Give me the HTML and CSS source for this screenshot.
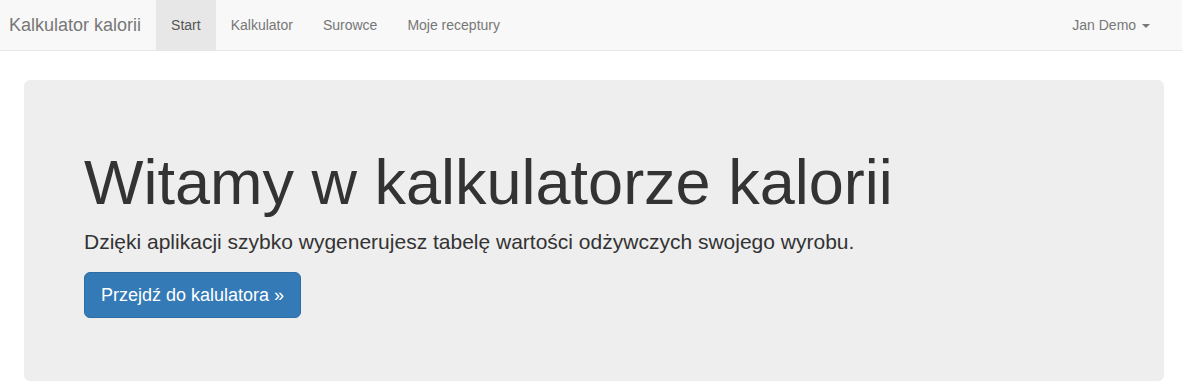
FILE: index.html
```html
<!DOCTYPE html>
<html lang="pl">
<head>
    <meta charset="UTF-8">
    <meta name="viewport" content="width=device-width, initial-scale=1.0">
    <title>Kalkulator kalorii</title>
    <link rel="stylesheet" href="styles.css">
</head>
<body>

<nav class="navbar">
    <a class="brand" href="#">Kalkulator kalorii</a>
    <ul class="nav">
        <li class="active"><a href="#">Start</a></li>
        <li><a href="#">Kalkulator</a></li>
        <li><a href="#">Surowce</a></li>
        <li><a href="#">Moje receptury</a></li>
    </ul>
    <ul class="nav nav-right">
        <li><a href="#">Jan Demo <span class="caret"></span></a></li>
    </ul>
</nav>

<div class="container">
    <div class="jumbotron">
        <h1>Witamy w kalkulatorze kalorii</h1>
        <p>Dzięki aplikacji szybko wygenerujesz tabelę wartości odżywczych swojego wyrobu.</p>
        <p><a class="btn" href="#">Przejdź do kalulatora &raquo;</a></p>
    </div>
</div>

</body>
</html>
```

FILE: styles.css
```css
* {
    box-sizing: border-box;
}
body {
    font-family: "Liberation Sans", Arial, Helvetica, sans-serif;
    font-size: 14px;
    line-height: 1.42857;
    color: #333;
    background-color: #fff;
    margin: 0;
}
a {
    text-decoration: none;
}
.navbar {
    display: flex;
    align-items: stretch;
    height: 51px;
    padding-right: 17px;
    background-color: #f8f8f8;
    border-bottom: 1px solid #e7e7e7;
}
.brand {
    padding: 15px 15px 15px 9px;
    font-size: 18px;
    line-height: 20px;
    color: #777;
}
.nav {
    display: flex;
    list-style: none;
    margin: 0;
    padding: 0;
}
.nav a {
    display: block;
    padding: 15px;
    line-height: 20px;
    color: #777;
}
.nav .active a {
    color: #555;
    background-color: #e7e7e7;
}
.nav-right {
    margin-left: auto;
}
.caret {
    display: inline-block;
    width: 0;
    height: 0;
    margin-left: 2px;
    vertical-align: middle;
    border-top: 4px solid;
    border-right: 4px solid transparent;
    border-left: 4px solid transparent;
}
.container {
    width: 1140px;
    margin: 29px 0 0 24px;
}
.jumbotron {
    padding: 48px 60px;
    background-color: #eee;
    border-radius: 6px;
}
.jumbotron h1 {
    margin: 20px 0 10px;
    font-size: 63px;
    font-weight: 500;
    line-height: 1.1;
}
.jumbotron p {
    margin: 0 0 15px;
    font-size: 21px;
    font-weight: 200;
}
.btn {
    display: inline-block;
    padding: 10px 16px;
    font-size: 18px;
    line-height: 1.3333333;
    color: #fff;
    background-color: #337ab7;
    border: 1px solid #2e6da4;
    border-radius: 6px;
}
```
